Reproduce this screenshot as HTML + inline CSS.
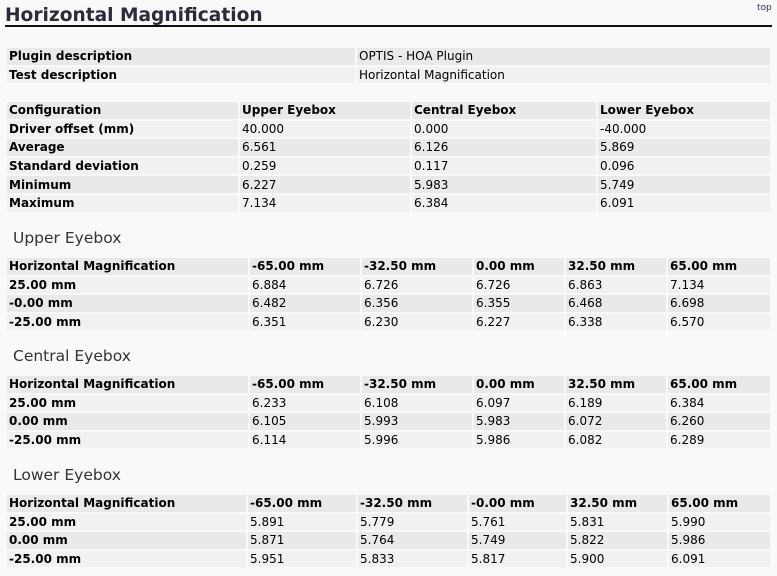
<!DOCTYPE html>
<html><head><meta charset="utf-8"><style>
html,body{margin:0;padding:0;background:#f9f9f9;width:777px;height:576px;overflow:hidden}
body{font-family:"DejaVu Sans",Verdana,"Liberation Sans",sans-serif;font-size:12px;color:#000;position:relative}
h1{position:absolute;left:5px;top:5px;margin:0;font-size:18.6px;font-weight:bold;color:#2b2b3a;width:767px;border-bottom:2px solid #111;line-height:21px;height:20px}
.top{position:absolute;left:757px;top:3px;font-size:9px;color:#336}
h2{position:absolute;left:13px;margin:0;font-size:15.5px;font-weight:normal;color:#333}
table{position:absolute;left:5px;width:767px;border-collapse:separate;border-spacing:2px;table-layout:fixed}
td{height:16.6px;padding:0 0 0 2px;line-height:16px;white-space:nowrap;overflow:hidden;background:#f1f1f1}
tr.h td,tr.e td{background:#e9e9e9}
td.b,tr.h td{font-weight:bold}
</style></head><body>
<h1>Horizontal Magnification</h1>
<div class="top">top</div>

<table style="top:46px">
<colgroup><col style="width:348px"><col></colgroup>
<tr class="e"><td class="b">Plugin description</td><td>OPTIS - HOA Plugin</td></tr>
<tr><td class="b">Test description</td><td>Horizontal Magnification</td></tr>
</table>

<table style="top:100px">
<colgroup><col style="width:231px"><col style="width:170px"><col style="width:184px"><col></colgroup>
<tr class="h"><td>Configuration</td><td>Upper Eyebox</td><td>Central Eyebox</td><td>Lower Eyebox</td></tr>
<tr><td class="b">Driver offset (mm)</td><td>40.000</td><td>0.000</td><td>-40.000</td></tr>
<tr class="e"><td class="b">Average</td><td>6.561</td><td>6.126</td><td>5.869</td></tr>
<tr><td class="b">Standard deviation</td><td>0.259</td><td>0.117</td><td>0.096</td></tr>
<tr class="e"><td class="b">Minimum</td><td>6.227</td><td>5.983</td><td>5.749</td></tr>
<tr><td class="b">Maximum</td><td>7.134</td><td>6.384</td><td>6.091</td></tr>
</table>

<h2 style="top:229px">Upper Eyebox</h2>
<table style="top:256px">
<colgroup><col style="width:241px"><col style="width:110px"><col style="width:110px"><col style="width:90px"><col style="width:100px"><col></colgroup>
<tr class="h"><td>Horizontal Magnification</td><td>-65.00 mm</td><td>-32.50 mm</td><td>0.00 mm</td><td>32.50 mm</td><td>65.00 mm</td></tr>
<tr><td class="b">25.00 mm</td><td>6.884</td><td>6.726</td><td>6.726</td><td>6.863</td><td>7.134</td></tr>
<tr class="e"><td class="b">-0.00 mm</td><td>6.482</td><td>6.356</td><td>6.355</td><td>6.468</td><td>6.698</td></tr>
<tr><td class="b">-25.00 mm</td><td>6.351</td><td>6.230</td><td>6.227</td><td>6.338</td><td>6.570</td></tr>
</table>

<h2 style="top:347px">Central Eyebox</h2>
<table style="top:374px">
<colgroup><col style="width:241px"><col style="width:110px"><col style="width:110px"><col style="width:90px"><col style="width:100px"><col></colgroup>
<tr class="h"><td>Horizontal Magnification</td><td>-65.00 mm</td><td>-32.50 mm</td><td>0.00 mm</td><td>32.50 mm</td><td>65.00 mm</td></tr>
<tr><td class="b">25.00 mm</td><td>6.233</td><td>6.108</td><td>6.097</td><td>6.189</td><td>6.384</td></tr>
<tr class="e"><td class="b">0.00 mm</td><td>6.105</td><td>5.993</td><td>5.983</td><td>6.072</td><td>6.260</td></tr>
<tr><td class="b">-25.00 mm</td><td>6.114</td><td>5.996</td><td>5.986</td><td>6.082</td><td>6.289</td></tr>
</table>

<h2 style="top:466px">Lower Eyebox</h2>
<table style="top:493px">
<colgroup><col style="width:239px"><col style="width:108px"><col style="width:109px"><col style="width:97px"><col style="width:99px"><col></colgroup>
<tr class="h"><td>Horizontal Magnification</td><td>-65.00 mm</td><td>-32.50 mm</td><td>-0.00 mm</td><td>32.50 mm</td><td>65.00 mm</td></tr>
<tr><td class="b">25.00 mm</td><td>5.891</td><td>5.779</td><td>5.761</td><td>5.831</td><td>5.990</td></tr>
<tr class="e"><td class="b">0.00 mm</td><td>5.871</td><td>5.764</td><td>5.749</td><td>5.822</td><td>5.986</td></tr>
<tr><td class="b">-25.00 mm</td><td>5.951</td><td>5.833</td><td>5.817</td><td>5.900</td><td>6.091</td></tr>
</table>
</body></html>
